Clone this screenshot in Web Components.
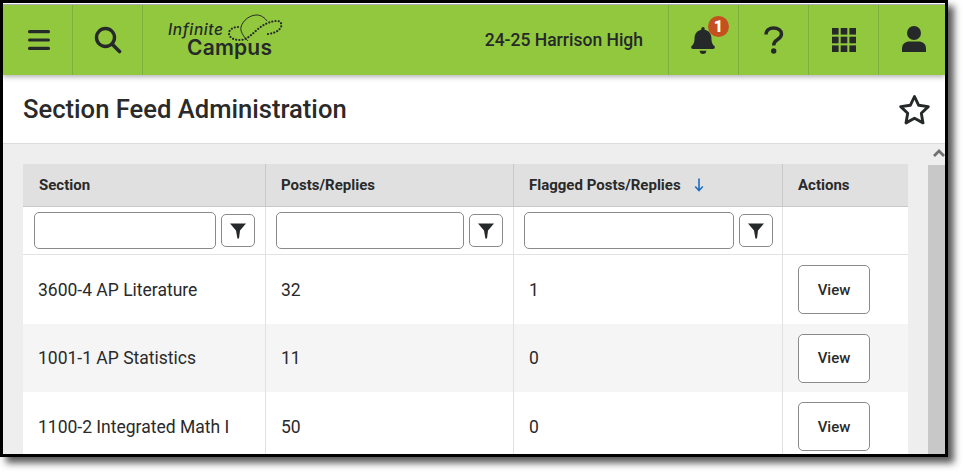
<!DOCTYPE html>
<html>
<head>
<meta charset="utf-8">
<style>
  html, body { margin: 0; height: 472px; overflow: hidden; background: #fff; }
  body { font-family: Roboto, "Liberation Sans", sans-serif; color: #2a2a2a; }
</style>
</head>
<body>
<app-frame>
  <top-nav slot="nav"></top-nav>
  <page-title slot="title">Section Feed Administration</page-title>
  <feed-table slot="content">
    <head-row></head-row>
    <filter-row></filter-row>
    <feed-row section="3600-4 AP Literature" posts="32" flagged="1" style="height:69px"></feed-row>
    <feed-row section="1001-1 AP Statistics" posts="11" flagged="0" shaded style="height:68.4px"></feed-row>
    <feed-row section="1100-2 Integrated Math I" posts="50" flagged="0"></feed-row>
  </feed-table>
</app-frame>

<script>
const COLS = '243px 248px 269px 125px';

class AppFrame extends HTMLElement {
    constructor() {
        super();
        this.attachShadow({ mode: 'open' }).innerHTML = `
        <style>
        :host {
            display: block;
            box-sizing: border-box;
            width: 948px;
            height: 457px;
            border: 3px solid #000;
            box-shadow: 6px 6px 7px rgba(0, 0, 0, 0.65);
            background: #fff;
            overflow: hidden;
        }
        .clip { display: flex; flex-direction: column; height: 100%; overflow: hidden; }
        .edge { height: 1px; background: #fff; flex: none; }
        .edge2 { height: 1px; background: #b9b9b9; flex: none; }
        .body { flex: 1; min-height: 0; background: #eee; display: flex; overflow: hidden; }
        .main { flex: 1; padding: 20px 0 0 20px; min-width: 0; }
        .bar { width: 17px; flex: none; display: flex; flex-direction: column; }
        .up { height: 21px; display: flex; align-items: flex-start; justify-content: center; padding: 5px 0 0 4px; box-sizing: border-box; }
        .track { flex: 1; background: #c8c8c8; }
        </style>
        <div class="clip">
            <div class="edge"></div><div class="edge2"></div>
            <slot name="nav"></slot>
            <slot name="title"></slot>
            <div class="body">
                <div class="main"><slot name="content"></slot></div>
                <div class="bar">
                    <div class="up"><svg width="12" height="8" viewBox="0 0 12 8"><path d="M1 7 L6 2 L11 7" fill="none" stroke="#707070" stroke-width="2.8"/></svg></div>
                    <div class="track"></div>
                </div>
            </div>
        </div>`;
    }
}
customElements.define('app-frame', AppFrame);

class NavCell extends HTMLElement {
    constructor() {
        super();
        this.attachShadow({ mode: 'open' }).innerHTML = `
        <style>
        :host {
            display: flex;
            position: relative;
            align-items: center;
            justify-content: center;
            width: 70px;
            height: 70px;
            box-sizing: border-box;
            flex: none;
        }
        :host([line]) { border-left: 1px solid #7fb03c; }
        :host([end]) { width: 67px; }
        :host([first]) { border-right: 1px solid #7fb03c; }
        :host([second]) { width: 69px; }
        </style>
        <slot></slot>`;
    }
}
customElements.define('nav-cell', NavCell);

class AppLogo extends HTMLElement {
    constructor() {
        super();
        this.attachShadow({ mode: 'open' }).innerHTML = `
        <style>
        :host {
            display: block;
            position: relative;
            width: 120px;
            height: 50px;
            margin: 5px 0 0 22px;
            color: #26292a;
        }
        svg { position: absolute; left: 0; top: 0; }
        .a, .b { display: block; width: max-content; white-space: nowrap; font-family: Inter, Roboto, sans-serif; }
        .a { font-size: 15.5px; font-style: italic; font-weight: 500; line-height: 15px; margin: 12px 0 0 3px; letter-spacing: 0.6px; }
        .b { font-size: 21px; line-height: 19px; margin: 1px 0 0 22px; font-weight: 600; letter-spacing: 0.2px; }
        </style>
        <span class="a">Infinite</span>
        <span class="b">Campus</span>
        <svg width="120" height="50" viewBox="165 10 120 50" fill="none" stroke="#26292a">
            <path d="M248 41 C243 36 240 31 241 27 C243 20 250 15 257 15 C261 15 265 18 267 21" stroke-width="1"/>
            <path d="M238 27 C233 27 229 30 229 33 C229 38 234 40 240 40 C247 40 252 34 258 29 C264 24 271 21 277 21 C281 21 282 24 281 27 C279 31 275 33 268 34" stroke-width="2.1" stroke-dasharray="0.1 3.1" stroke-linecap="round"/>
        </svg>`;
    }
}
customElements.define('app-logo', AppLogo);

class TopNav extends HTMLElement {
    constructor() {
        super();
        this.attachShadow({ mode: 'open' }).innerHTML = `
        <style>
        :host {
            display: flex;
            flex: none;
            height: 70px;
            background: #92c83e;
            box-shadow: 0 2px 5px rgba(0, 0, 0, 0.3);
            position: relative;
            color: #26292a;
        }
        .grow { flex: 1; min-width: 0; display: flex; align-items: flex-start; }
        .school { margin-left: auto; padding-right: 25px; align-self: center; font-size: 17.5px; font-weight: 500; white-space: nowrap; }
        .badge {
            position: absolute;
            left: 39px;
            top: 11px;
            width: 21px;
            height: 21px;
            border-radius: 50%;
            background: #c5501f;
            color: #fff;
            font-size: 16px;
            font-weight: 900;
            line-height: 21px;
            text-align: center;
        }
        </style>
        <nav-cell first>
            <svg width="22" height="20" viewBox="0 0 22 20" style="margin-left:2px"><g fill="#26292a"><rect y="0" width="22" height="3.2" rx="1.5"/><rect y="8.4" width="22" height="3.2" rx="1.5"/><rect y="16.8" width="22" height="3.2" rx="1.5"/></g></svg>
        </nav-cell>
        <nav-cell second>
            <svg width="28" height="28" viewBox="0 0 28 28" style="margin-left:1px"><circle cx="11.5" cy="11.5" r="9" fill="none" stroke="#26292a" stroke-width="3.4"/><path d="M18 18 L25.5 25.5" stroke="#26292a" stroke-width="3.6" stroke-linecap="round"/></svg>
        </nav-cell>
        <div class="grow" style="border-left:1px solid #7fb03c">
            <app-logo></app-logo>
            <span class="school">24-25 Harrison High</span>
        </div>
        <nav-cell line>
            <svg width="24" height="27" viewBox="0 0 448 512" style="margin:1px 1px 0 0"><path fill="#26292a" d="M224 512c35.32 0 63.97-28.65 63.97-64H160.03c0 35.35 28.65 64 63.97 64zm215.39-149.71c-19.32-20.76-55.47-51.99-55.47-154.29 0-77.7-54.48-139.9-127.94-155.16V32c0-17.67-14.32-32-31.98-32s-31.98 14.33-31.98 32v20.84C118.56 68.1 64.08 130.3 64.08 208c0 102.3-36.15 133.53-55.47 154.29-6 6.45-8.66 14.16-8.61 21.71.11 16.4 12.98 32 32.1 32h383.8c19.12 0 32-15.6 32.1-32 .05-7.55-2.61-15.27-8.61-21.71z"/></svg>
            <span class="badge">1</span>
        </nav-cell>
        <nav-cell line>
            <svg width="20" height="28" viewBox="0 0 20 28"><path d="M2 8.5 C2 4 5.5 2 9.5 2 C14 2 17.5 4.5 17.5 8 C17.5 11 15.5 12.5 13 14 C10.8 15.3 9.7 16.3 9.7 19.5" fill="none" stroke="#26292a" stroke-width="3.4"/><circle cx="9.7" cy="25" r="2.7" fill="#26292a"/></svg>
        </nav-cell>
        <nav-cell line>
            <svg width="24" height="24" viewBox="0 0 24 24" style="margin-top:-1px"><g fill="#26292a"><rect x="0" y="0" width="6.6" height="6.6"/><rect x="8.7" y="0" width="6.6" height="6.6"/><rect x="17.4" y="0" width="6.6" height="6.6"/><rect x="0" y="8.7" width="6.6" height="6.6"/><rect x="8.7" y="8.7" width="6.6" height="6.6"/><rect x="17.4" y="8.7" width="6.6" height="6.6"/><rect x="0" y="17.4" width="6.6" height="6.6"/><rect x="8.7" y="17.4" width="6.6" height="6.6"/><rect x="17.4" y="17.4" width="6.6" height="6.6"/></g></svg>
        </nav-cell>
        <nav-cell line end>
            <svg width="24" height="26" viewBox="0 0 24 26" style="margin:0 0 2px 3px"><circle cx="12" cy="7" r="7" fill="#26292a"/><path d="M0 26 V22.5 C0 18 3.5 15.5 7.5 15.5 H16.5 C20.5 15.5 24 18 24 22.5 V26 Z" fill="#26292a"/></svg>
        </nav-cell>`;
    }
}
customElements.define('top-nav', TopNav);

class PageTitle extends HTMLElement {
    constructor() {
        super();
        this.attachShadow({ mode: 'open' }).innerHTML = `
        <style>
        :host {
            display: flex;
            flex: none;
            align-items: center;
            justify-content: space-between;
            box-sizing: border-box;
            height: 69px;
            padding: 0 14px 0 20px;
            background: #fff;
            border-bottom: 1px solid #dcdcdc;
            font-size: 25.6px;
            font-weight: 500;
            color: #2a2a2a;
        }
        svg { margin-top: 1px; }
        </style>
        <slot></slot>
        <svg width="33" height="32" viewBox="0 0 33 32"><path d="M16.5 2.5 L20.7 11.3 L30.3 12.6 L23.3 19.3 L25 28.9 L16.5 24.3 L8 28.9 L9.7 19.3 L2.7 12.6 L12.3 11.3 Z" fill="none" stroke="#26292a" stroke-width="2.9" stroke-linejoin="round"/></svg>`;
    }
}
customElements.define('page-title', PageTitle);

class FeedTable extends HTMLElement {
    constructor() {
        super();
        this.attachShadow({ mode: 'open' }).innerHTML = `
        <style>
        :host { display: block; width: 885px; background: #fff; }
        </style>
        <slot></slot>`;
    }
}
customElements.define('feed-table', FeedTable);

class HeadRow extends HTMLElement {
    constructor() {
        super();
        this.attachShadow({ mode: 'open' }).innerHTML = `
        <style>
        :host {
            display: grid;
            grid-template-columns: ${COLS};
            height: 43px;
            box-sizing: border-box;
            background: #e0e0e0;
            border-bottom: 1px solid #c8c8c8;
            font-size: 15px;
            font-weight: 700;
            color: #2a2a2a;
        }
        div { display: flex; align-items: center; gap: 13px; padding-left: 16px; box-sizing: border-box; border-right: 1px solid #c8c8c8; }
        div + div { padding-left: 15px; }
        div:last-child { border-right: 0; }
        </style>
        <div>Section</div>
        <div>Posts/Replies</div>
        <div>Flagged Posts/Replies
            <svg width="10" height="14" viewBox="0 0 10 14"><path d="M5 0.5 V12 M1.2 8.5 L5 12.5 L8.8 8.5" fill="none" stroke="#1f6fc0" stroke-width="1.6"/></svg>
        </div>
        <div>Actions</div>`;
    }
}
customElements.define('head-row', HeadRow);

class FilterBox extends HTMLElement {
    constructor() {
        super();
        this.attachShadow({ mode: 'open' }).innerHTML = `
        <style>
        :host { display: flex; align-items: center; gap: 5px; padding-left: var(--l, 10px); }
        input {
            box-sizing: border-box;
            width: var(--w);
            height: 37px;
            margin: 0;
            border: 1px solid #8a8a8a;
            border-radius: 5px;
            background: #fff;
        }
        button {
            box-sizing: border-box;
            width: 34px;
            height: 33px;
            padding: 0;
            border: 1px solid #8a8a8a;
            border-radius: 5px;
            background: #fff;
            display: flex;
            align-items: center;
            justify-content: center;
        }
        </style>
        <input type="text">
        <button><svg width="16" height="16" viewBox="0 0 16 16"><path d="M0 0.5 H16 L10 7.5 L9 15.5 H7.4 L6 7.5 Z" fill="#26292a"/></svg></button>`;
    }
}
customElements.define('filter-box', FilterBox);

class FilterRow extends HTMLElement {
    constructor() {
        super();
        this.attachShadow({ mode: 'open' }).innerHTML = `
        <style>
        :host {
            display: grid;
            grid-template-columns: ${COLS};
            height: 48px;
            box-sizing: border-box;
            background: #fff;
            border-bottom: 1px solid #e2e2e2;
        }
        .c { display: flex; align-items: center; box-sizing: border-box; border-right: 1px solid #e2e2e2; }
        .c:last-child { border-right: 0; }
        </style>
        <div class="c"><filter-box style="--w:182px;--l:11px"></filter-box></div>
        <div class="c"><filter-box style="--w:188px"></filter-box></div>
        <div class="c"><filter-box style="--w:210px"></filter-box></div>
        <div class="c"></div>`;
    }
}
customElements.define('filter-row', FilterRow);

class FeedRow extends HTMLElement {
    constructor() {
        super();
        const root = this.attachShadow({ mode: 'open' });
        root.innerHTML = `
        <style>
        :host {
            display: grid;
            grid-template-columns: ${COLS};
            height: 68.67px;
            background: #fff;
            font-size: 17.5px;
            color: #2a2a2a;
        }
        :host([shaded]) { background: #f5f5f5; }
        .c { display: flex; align-items: center; padding-left: 15px; box-sizing: border-box; border-right: 1px solid #e2e2e2; }
        .c:first-child { padding-left: 16px; }
        .c:last-child { border-right: 0; }
        button {
            box-sizing: border-box;
            width: 72px;
            height: 49px;
            padding: 0;
            border: 1px solid #8a8a8a;
            border-radius: 5px;
            background: #fff;
            color: #2a2a2a;
            font: 500 15px Roboto, "Liberation Sans", sans-serif;
        }
        </style>
        <div class="c"><span class="s"></span></div>
        <div class="c"><span class="p"></span></div>
        <div class="c"><span class="f"></span></div>
        <div class="c"><button>View</button></div>`;
        root.querySelector('.s').textContent = this.getAttribute('section');
        root.querySelector('.p').textContent = this.getAttribute('posts');
        root.querySelector('.f').textContent = this.getAttribute('flagged');
    }
}
customElements.define('feed-row', FeedRow);
</script>
</body>
</html>
